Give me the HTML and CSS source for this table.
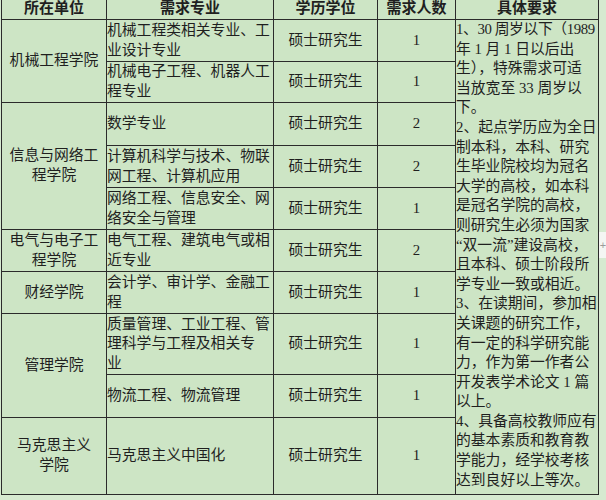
FILE: index.html
```html
<!DOCTYPE html>
<html lang="zh-CN">
<head>
<meta charset="utf-8">
<link rel="stylesheet" href="styles.css">
</head>
<body>
<div class="page">
<table class="grid">
  <colgroup>
    <col class="c1"><col class="c2"><col class="c3"><col class="c4"><col class="c5">
  </colgroup>
  <tr class="head">
    <th>所在单位</th><th>需求专业</th><th>学历学位</th><th>需求人数</th><th>具体要求</th>
  </tr>
  <tr class="r1">
    <td class="unit" rowspan="2">机械工程学院</td>
    <td class="major">机械工程类相关专业、工<br>业设计专业</td>
    <td class="deg">硕士研究生</td><td class="num">1</td>
    <td class="req" rowspan="10"><span class="tight">1、30 周岁以下（1989</span><br>年 1 月 1 日以后出<br>生），特殊需求可适<br>当放宽至 33 周岁以<br>下。<br>2、起点学历应为全日<br>制本科，本科、研究<br>生毕业院校均为冠名<br>大学的高校，如本科<br>是冠名学院的高校，<br>则研究生必须为国家<br>“双一流”建设高校，<br>且本科、硕士阶段所<br>学专业一致或相近。<br>3、在读期间，参加相<br>关课题的研究工作，<br>有一定的科学研究能<br>力，作为第一作者公<br>开发表学术论文 1 篇<br>以上。<br>4、具备高校教师应有<br>的基本素质和教育教<br>学能力，经学校考核<br>达到良好以上等次。</td>
  </tr>
  <tr class="r2">
    <td class="major">机械电子工程、机器人工<br>程专业</td>
    <td class="deg">硕士研究生</td><td class="num">1</td>
  </tr>
  <tr class="r3">
    <td class="unit" rowspan="3">信息与网络工<br>程学院</td>
    <td class="major">数学专业</td>
    <td class="deg">硕士研究生</td><td class="num">2</td>
  </tr>
  <tr class="r4">
    <td class="major">计算机科学与技术、物联<br>网工程、计算机应用</td>
    <td class="deg">硕士研究生</td><td class="num">2</td>
  </tr>
  <tr class="r5">
    <td class="major">网络工程、信息安全、网<br>络安全与管理</td>
    <td class="deg">硕士研究生</td><td class="num">1</td>
  </tr>
  <tr class="r6">
    <td class="unit">电气与电子工<br>程学院</td>
    <td class="major">电气工程、建筑电气或相<br>近专业</td>
    <td class="deg">硕士研究生</td><td class="num">2</td>
  </tr>
  <tr class="r7">
    <td class="unit">财经学院</td>
    <td class="major">会计学、审计学、金融工<br>程</td>
    <td class="deg">硕士研究生</td><td class="num">1</td>
  </tr>
  <tr class="r8">
    <td class="unit" rowspan="2">管理学院</td>
    <td class="major">质量管理、工业工程、管<br>理科学与工程及相关专<br>业</td>
    <td class="deg">硕士研究生</td><td class="num">1</td>
  </tr>
  <tr class="r9">
    <td class="major">物流工程、物流管理</td>
    <td class="deg">硕士研究生</td><td class="num">1</td>
  </tr>
  <tr class="r10">
    <td class="unit">马克思主义<br>学院</td>
    <td class="major">马克思主义中国化</td>
    <td class="deg">硕士研究生</td><td class="num">1</td>
  </tr>
</table>
<div class="plus">+</div>
</div>
</body>
</html>
```

FILE: styles.css
```css
html, body {
  margin: 0;
  padding: 0;
  background: #d6ead0;
}
.page {
  position: relative;
  width: 606px;
  height: 500px;
  overflow: hidden;
  background: #d6ead0;
}
.grid {
  border-collapse: collapse;
  table-layout: fixed;
  width: 597px;
  margin: -2px 0 0 1px;
  background: #cde5c5;
  font-family: "Liberation Serif", "Noto Sans CJK SC", sans-serif;
  font-size: 14.8px;
  color: #1f1f1f;
}
.c1 { width: 105px; }
.c2 { width: 167px; }
.c3 { width: 104px; }
.c4 { width: 78px; }
.c5 { width: 143px; }
.grid th, .grid td {
  border: 1px solid #2b2b2b;
  padding: 0;
  line-height: 19.6px;
  white-space: nowrap;
  overflow: hidden;
}
.grid th {
  font-weight: bold;
  text-align: center;
  font-size: 15px;
}
.head { height: 21px; }
.r1 { height: 42px; }
.r2 { height: 41px; }
.r3 { height: 43px; }
.r4 { height: 42px; }
.r5 { height: 42px; }
.r6 { height: 42px; }
.r7 { height: 42px; }
.r8 { height: 61px; }
.r9 { height: 43px; }
.r10 { height: 77px; }
.unit { text-align: center; vertical-align: middle; }
.major { text-align: left; padding-left: 2px; vertical-align: middle; }
.deg, .num { text-align: center; vertical-align: middle; }
.req {
  vertical-align: top;
  text-align: left;
  padding: 2px 0 0 1px;
  font-size: 14.8px;
}
.tight { letter-spacing: -0.4px; }
.plus {
  position: absolute;
  left: 599px;
  top: 232px;
  width: 8px;
  height: 26px;
  background: #f4f6f3;
  color: #9a9a9a;
  font: 11px/26px "Liberation Sans", sans-serif;
  text-align: center;
}
```
